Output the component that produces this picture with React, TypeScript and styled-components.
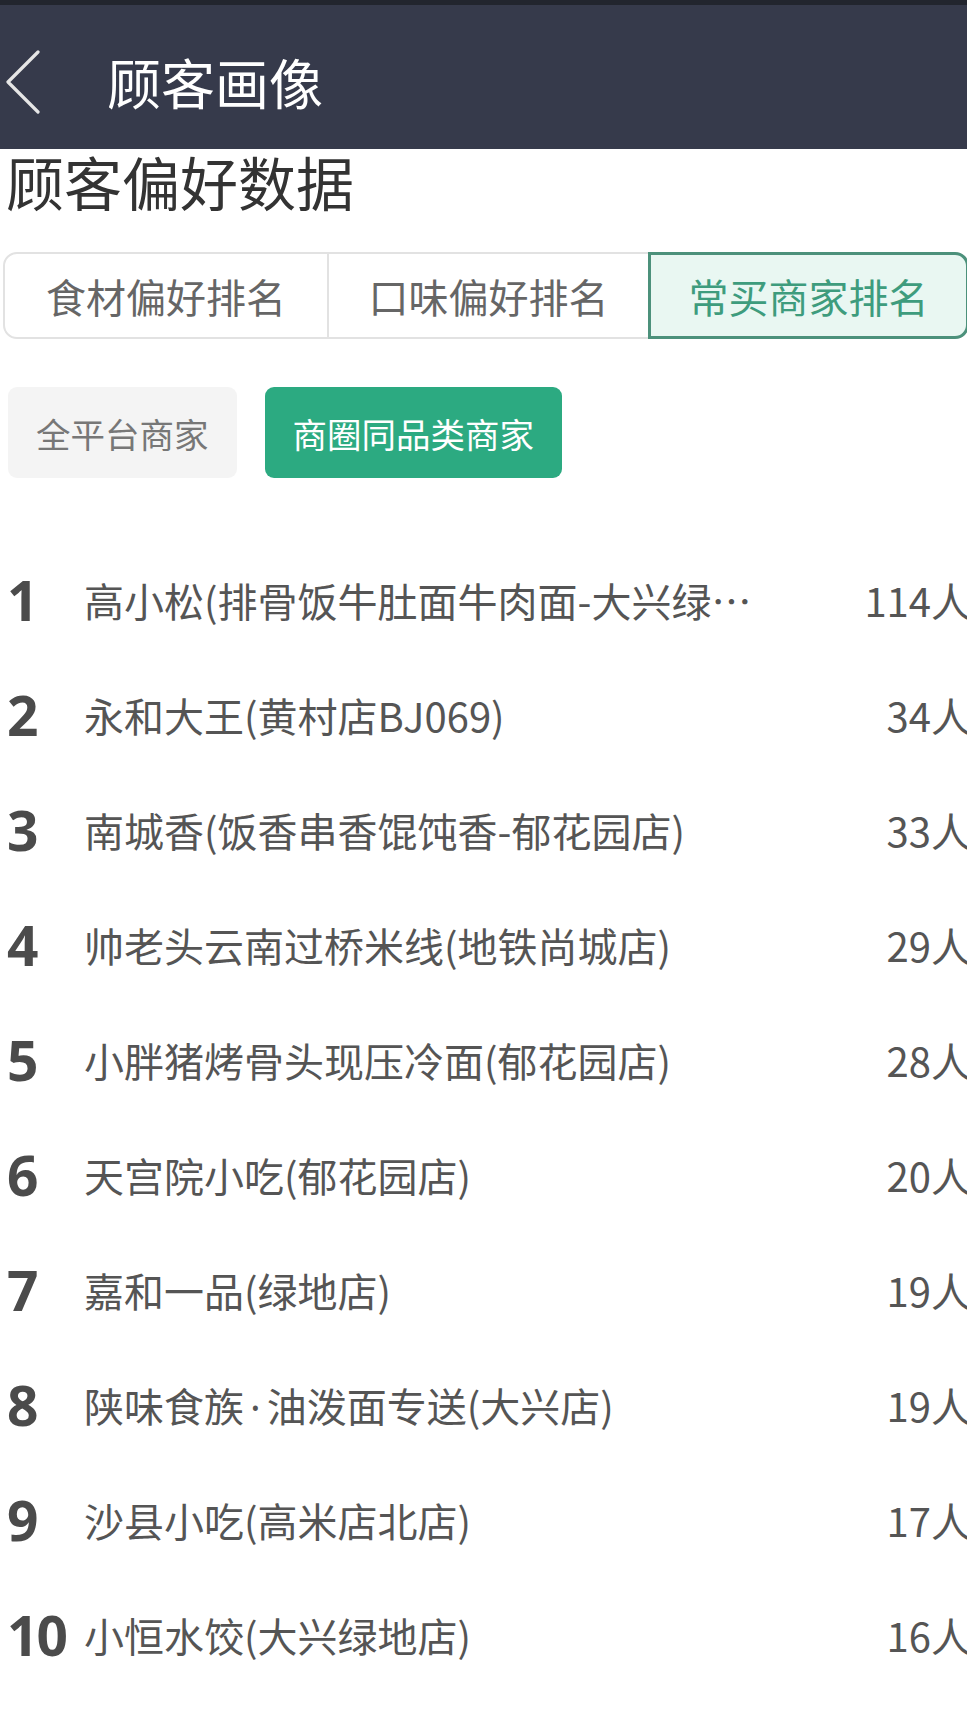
import React, { useState } from 'react';
import styled, { createGlobalStyle } from 'styled-components';

const GlobalStyle = createGlobalStyle`
    html, body {
        margin:0;
        padding:0;
        background:#fff;
        overflow-x:hidden;
    }
    body {
        font-family: "Noto Sans CJK SC", "Noto Sans", sans-serif;
    }
`;

const Page = styled.div`
    width:100%;
    min-height:1724px;
    background:#fff;
    overflow:hidden;
`;

const Header = styled.header`
    height:149px;
    box-sizing:border-box;
    border-top:5px solid #22252e;
    background-color:#363a4b;
    display:flex;
    align-items:center;
    padding-top:10px;
`;

const BackBtn = styled.button`
    width:40px;
    height:64px;
    margin-left:5px;
    padding:0;
    border:none;
    background:none;
    display:flex;
    align-items:center;
    cursor:pointer;
`;

const HeaderTitle = styled.h1`
    margin:0 0 0 62px;
    font-size:54px;
    font-weight:400;
    line-height:1;
    color:#fff;
`;

const SectionTitle = styled.h2`
    margin:3px 0 0 6px;
    font-size:58px;
    font-weight:400;
    line-height:1;
    color:#333;
`;

const Tabs = styled.div`
    margin:42px -2px 0 3px;
    height:87px;
    box-sizing:border-box;
    display:grid;
    grid-template-columns:322px 321px 1fr;
    border:2px solid #e2e2e2;
    border-radius:14px;
`;

const Tab = styled.div<{ $active?: boolean }>`
    display:flex;
    align-items:center;
    justify-content:center;
    margin:${(p) => (p.$active ? '-2px -2px -2px 0' : '0')};
    font-size:40px;
    color:${(p) => (p.$active ? '#3e9c7d' : '#666')};
    background:${(p) => (p.$active ? '#e9f7f2' : 'transparent')};
    border:${(p) => (p.$active ? '3px solid #4c917b' : 'none')};
    border-left:${(p) => (p.$active ? '3px solid #4c917b' : '2px solid #e2e2e2')};
    border-radius:${(p) => (p.$active ? '0 14px 14px 0' : '0')};
    &:first-child {
        border-left:none;
    }
`;

const Filters = styled.div`
    margin:48px 0 0 8px;
    display:flex;
    gap:28px;
`;

const FilterBtn = styled.button<{ $active?: boolean }>`
    height:91px;
    padding:0 28px;
    border:none;
    border-radius:9px;
    font-family:inherit;
    font-size:34.5px;
    color:${(p) => (p.$active ? '#fff' : '#777')};
    background:${(p) => (p.$active ? '#2caa81' : '#f4f4f4')};
    cursor:pointer;
`;

const List = styled.ol`
    list-style:none;
    margin:64px 0 0 0;
    padding:0;
`;

const Row = styled.li`
    height:115px;
    display:flex;
    align-items:center;
`;

const Rank = styled.span`
    width:84px;
    flex-shrink:0;
    padding-left:7px;
    box-sizing:border-box;
    font-family:"Noto Sans", "Open Sans", sans-serif;
    font-weight:700;
    font-size:55px;
    letter-spacing:-2px;
    line-height:1;
    color:#4b4b4b;
`;

const Name = styled.span`
    flex:1;
    min-width:0;
    max-width:668px;
    font-size:40px;
    color:#555;
    white-space:nowrap;
    overflow:hidden;
    text-overflow:ellipsis;
`;

const Dot = styled.span`
    margin:0 6px;
    font-family:"Noto Sans", sans-serif;
`;

const Count = styled.span`
    margin-left:auto;
    margin-right:-4px;
    flex-shrink:0;
    font-size:40px;
    color:#555;
    white-space:nowrap;
`;

const shops = [
    { name: '高小松(排骨饭牛肚面牛肉面-大兴绿地店)', count: 114 },
    { name: '永和大王(黄村店BJ069)', count: 34 },
    { name: '南城香(饭香串香馄饨香-郁花园店)', count: 33 },
    { name: '帅老头云南过桥米线(地铁尚城店)', count: 29 },
    { name: '小胖猪烤骨头现压冷面(郁花园店)', count: 28 },
    { name: '天宫院小吃(郁花园店)', count: 20 },
    { name: '嘉和一品(绿地店)', count: 19 },
    { name: '陕味食族·油泼面专送(大兴店)', count: 19 },
    { name: '沙县小吃(高米店北店)', count: 17 },
    { name: '小恒水饺(大兴绿地店)', count: 16 },
];

const tabs = ['食材偏好排名', '口味偏好排名', '常买商家排名'];
const filters = ['全平台商家', '商圈同品类商家'];

// the CJK font draws "·" full width, so the dot gets a latin font
const renderName = (name: string) =>
    name.split('·').map((part, i) => (
        <React.Fragment key={i}>
            {i > 0 && <Dot>·</Dot>}
            {part}
        </React.Fragment>
    ));

const App = () => {
    const [tab, setTab] = useState(2);
    const [filter, setFilter] = useState(1);

    return (
        <Page>
            <GlobalStyle />
            <Header>
                <BackBtn aria-label="back">
                    <svg width="40" height="64" viewBox="0 0 40 64">
                        <polyline points="33,2 3,32 33,62" fill="none" stroke="#e6e6e6" strokeWidth="3.2" strokeLinecap="round" strokeLinejoin="round" />
                    </svg>
                </BackBtn>
                <HeaderTitle>顾客画像</HeaderTitle>
            </Header>
            <SectionTitle>顾客偏好数据</SectionTitle>
            <Tabs>
                {tabs.map((t, i) => (
                    <Tab key={t} $active={tab === i} onClick={() => setTab(i)}>{t}</Tab>
                ))}
            </Tabs>
            <Filters>
                {filters.map((f, i) => (
                    <FilterBtn key={f} $active={filter === i} onClick={() => setFilter(i)}>{f}</FilterBtn>
                ))}
            </Filters>
            <List>
                {shops.map((s, i) => (
                    <Row key={s.name}>
                        <Rank>{i + 1}</Rank>
                        <Name>{renderName(s.name)}</Name>
                        <Count>{s.count}人</Count>
                    </Row>
                ))}
            </List>
        </Page>
    );
}

export default App;
